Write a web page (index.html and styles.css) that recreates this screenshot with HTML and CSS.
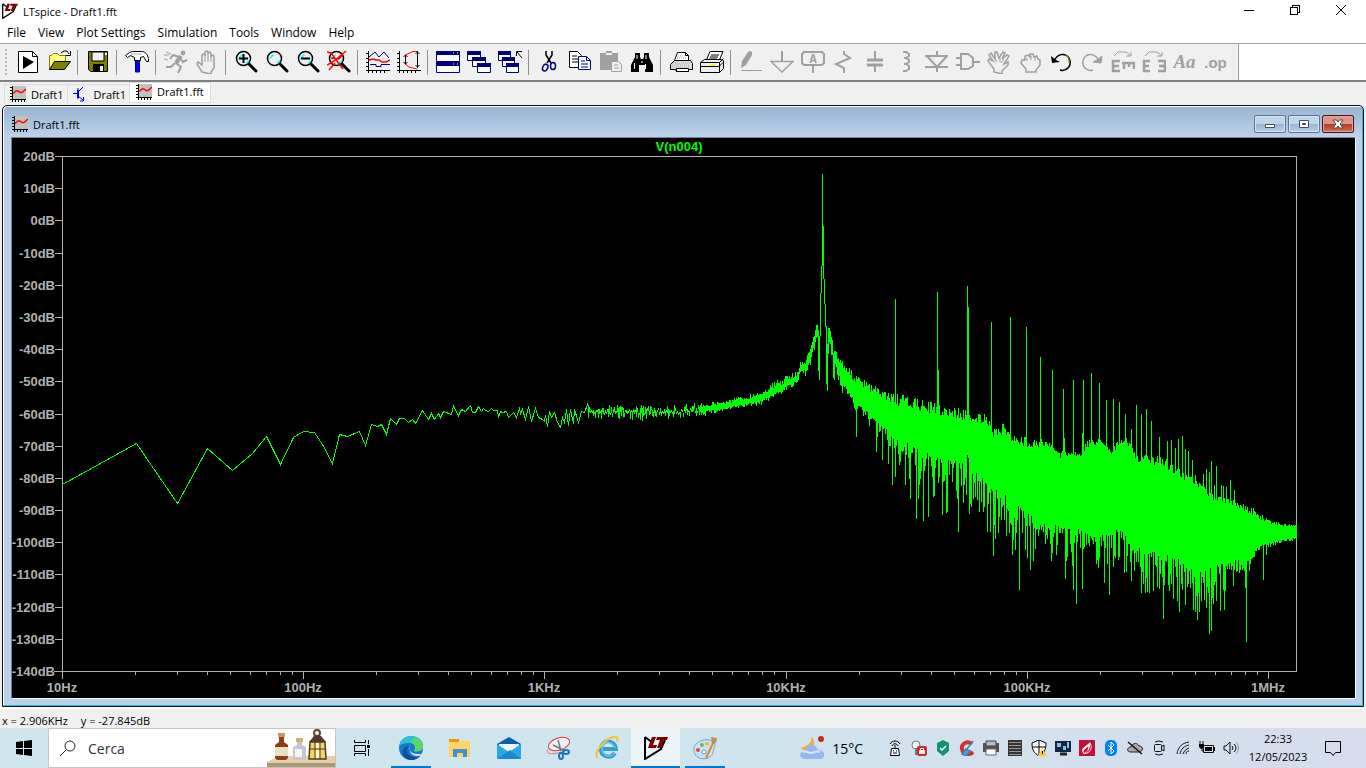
FILE: index.html
```html
<!DOCTYPE html>
<html lang="it">
  <head>
    <meta charset="UTF-8" />
    <title>LTspice - Draft1.fft</title>
    <link rel="stylesheet" href="styles.css">
  </head>
  <body>
    <svg class="sprite" aria-hidden="true">
      <symbol id="icon-chart" viewBox="0 0 16 16">
        <path d="M2 0h14v14H2z" fill="#c0c0c0"/>
        <path d="M2.5 0v16M0 13.5h16M0 1.5h2M0 4.5h2M0 7.5h2M0 10.5h2M5.5 14v2M8.5 14v2M11.5 14v2M14.5 14v2" stroke="#000" fill="none" shape-rendering="crispEdges"/>
        <path d="M3 7.5l3-2.500h2l2 1.500h2l4-3.500" stroke="#f00" stroke-width="1.5" fill="none"/>
      </symbol>
      <symbol id="icon-lt" viewBox="0 0 24 24">
        <path d="M1 1v22l16-10 4-9M1 1l8 6" stroke="#000" stroke-width="2" fill="none"/>
        <path d="M8 1h4L9 9h4l-1 3H4l1-3zM13 1h11l-1 3h-3l-3 8h-4l3-8h-4z" fill="#800000"/>
      </symbol>
      <symbol id="icon-glass" viewBox="0 0 24 24">
        <path d="M15 14l7 7" stroke="#000" stroke-width="3" stroke-linecap="round"/>
        <circle cx="9.5" cy="8.5" r="7" fill="#eee" stroke="#000" stroke-width="1.5"/>
        <path d="M4.5 8.5l4-4M12 13.5l3-3" stroke="#0ff" stroke-width="1.5"/>
      </symbol>
    </svg>

    <div class="titlebar">
      <svg class="app-icon" viewBox="0 0 24 24"><use href="#icon-lt"/></svg>
      <span class="title">LTspice - Draft1.fft</span>
      <div class="window-buttons">
        <button aria-label="Minimize"><svg viewBox="0 0 10 10"><path d="M0 5.5h10"/></svg></button>
        <button aria-label="Restore"><svg viewBox="0 0 10 10"><path d="M.5 2.5h7v7h-7zM2.5 2.5v-2h7v7h-2"/></svg></button>
        <button aria-label="Close"><svg viewBox="0 0 10 10"><path d="M0 0l10 10M10 0L0 10" shape-rendering="auto"/></svg></button>
      </div>
    </div>

    <nav class="menu">
      <a href="#">File</a>
      <a href="#">View</a>
      <a href="#">Plot Settings</a>
      <a href="#">Simulation</a>
      <a href="#">Tools</a>
      <a href="#">Window</a>
      <a href="#">Help</a>
    </nav>

    <div class="toolbar-row">
      <div class="toolbar">
        <span class="grip"></span>
        <button aria-label="Run"><svg viewBox="0 0 24 24"><path d="M2.5 1.5h14l5 5v16h-19z" fill="#fff" stroke="#000"/><path d="M16.5 1.5v5h5" fill="none" stroke="#000"/><path d="M7 6l11 6-11 7z"/></svg></button>
        <button aria-label="Open"><svg viewBox="0 0 24 24"><path d="M2.5 19.5v-14h2l2-2h4l2 2h6v6" fill="#ffff80" stroke="#808000"/><path d="M2.5 19.5l5-8h16l-6 8z" fill="#808000" stroke="#000"/><path d="M14 3l3-2h3l2 3M23.5 1v4.5h-5" fill="none" stroke="#000"/></svg></button>
        <span class="sep"></span>
        <button aria-label="Save"><svg viewBox="0 0 24 24"><path d="M2.5 1.5h19v20h-17l-2-2z" fill="#808000" stroke="#000"/><path d="M6 2h12v9H6z" fill="#f0f0f0" stroke="#000"/><path d="M7 14h11v8H7z"/><path d="M14 16h3v5h-3z" fill="#f0f0f0"/><path d="M19 3h2v2h-2z" fill="#fff"/></svg></button>
        <span class="sep"></span>
        <button aria-label="Control panel"><svg viewBox="0 0 24 24"><path d="M10.5 10v12h4V10z" fill="#00f" stroke="#000080"/><path d="M.5 5.5l4-3 3-1h9c4 0 6 3 7 7v3h-2l-3-5-3 1v3h-6v-3l-4-2-3 2z" fill="#fff" stroke="#000"/><path d="M6 4h11" stroke="#aaa"/></svg></button>
        <span class="sep"></span>
        <button aria-label="Simulate" disabled><svg viewBox="0 0 24 24" class="gray"><circle cx="19" cy="3" r="2" fill="#a0a0a0"/><path d="M17 6l-5 7" stroke-width="4"/><path d="M15 7L9 5 6 9M16 8l3 4 4-2M12 13l5 4-3 6M11 13l-4 4H2" stroke-width="2"/><path d="M2 2l5 2M0 5h5M0 9l4 1"/></svg></button>
        <button aria-label="Halt" disabled><svg viewBox="0 0 24 24" class="gray"><path d="M7 22L2 14l1-2 4 3V5l2-1 1 1V2l2-1 1 1v1l2-1 1 2v2l2-1 1 2v11l-3 4v2z" stroke-width="1.5"/><path d="M10 4v8M13 3v9M16 5v7"/></svg></button>
        <span class="sep"></span>
        <button aria-label="Zoom in"><svg viewBox="0 0 24 24"><use href="#icon-glass"/><path d="M5 8.500h9M9.500 4v9" stroke="#000" stroke-width="2"/></svg></button>
        <button aria-label="Pan"><svg viewBox="0 0 24 24"><use href="#icon-glass"/></svg></button>
        <button aria-label="Zoom out"><svg viewBox="0 0 24 24"><use href="#icon-glass"/><path d="M5 8.500h9" stroke="#000" stroke-width="2"/></svg></button>
        <button aria-label="Zoom full extents"><svg viewBox="0 0 24 24"><use href="#icon-glass"/><path d="M0 2l4 1 12 16M0 15l7-4L19 1M2 20l6-7M4 8l8 1 4-5" stroke="#f00" stroke-width="1.5" fill="none"/></svg></button>
        <span class="sep"></span>
        <button aria-label="Autorange"><svg viewBox="0 0 24 24"><path d="M2.5 1v22M0 20.5h24M0 3.5h2M0 8.5h2M0 12.5h2M0 16.5h2M6.5 20v3M10.5 20v3M14.5 20v3M18.5 20v3" stroke="#000"/><path d="M3 7l6-5 4 5 5-5 5 6" fill="none" stroke="#000080"/><path d="M3 10l4-1 3 1h3l3 2h4l4-2" fill="none" stroke="#f00" stroke-width="1.5"/><path d="M4 14.5h6v2h5v-2h9" fill="none" stroke="#000080"/></svg></button>
        <button aria-label="Plot limits"><svg viewBox="0 0 24 24"><path d="M2.5 1v22M0 20.5h24M0 3.5h2M0 8.5h2M0 12.5h2M0 16.5h2M6.5 20v3M10.5 20v3M14.5 20v3M18.5 20v3" stroke="#000"/><path d="M20 1.500h-4L8 5M8 14l4 3 8 2" fill="none" stroke="#f00"/><path d="M8.5 5v9M6.500 7l2-2 2 2M6.500 12l2 2 2-2M20.5 1v17M18.500 4l2-2 2 2M18.500 15l2 2 2-2" fill="none" stroke="#000"/></svg></button>
        <span class="sep"></span>
        <button aria-label="Tile windows"><svg viewBox="0 0 24 24" class="navy"><path d="M.5 1.5h23v10H.5zM.5 12.5h23v10H.5z"/><path d="M0 1h24v4H0zM0 12h24v4H0z" fill="#000080" stroke="none"/><path d="M17 3h1M21 3h1M17 14h1M21 14h1" stroke="#fff"/></svg></button>
        <button aria-label="Cascade windows"><svg viewBox="0 0 24 24" class="navy"><path d="M.5 1.5h13v9H.5zM5.5 7.5h13v9h-13zM10.5 13.5h13v9h-13z"/><path d="M0 1h14v4H0zM5 7h14v4H5zM10 13h14v4H10z" fill="#000080" stroke="none"/></svg></button>
        <button aria-label="Close windows"><svg viewBox="0 0 24 24" class="navy"><path d="M.5 1.5h12v9H.5zM4.5 7.5h12v9h-12zM8.5 13.5h12v9h-12z"/><path d="M0 1h13v4H0zM4 7h13v4H4zM8 13h13v4H8z" fill="#000080" stroke="none"/><path d="M18.5 6V1.5H24M19 2l5 6" fill="none" stroke="#000"/></svg></button>
        <span class="sep"></span>
        <button aria-label="Cut"><svg viewBox="0 0 24 24"><path d="M9 1v4l5 8M15 1v4l-5 8" fill="none" stroke="#000" stroke-width="1.5"/><ellipse cx="8" cy="17.5" rx="2.5" ry="3.5" transform="rotate(25 8 18)" class="loop"/><ellipse cx="16" cy="16" rx="2.5" ry="3.5" class="loop"/></svg></button>
        <button aria-label="Copy"><svg viewBox="0 0 24 24"><path d="M1.5 1.5h8l4 4v12h-12z" fill="#fff" stroke="#000"/><path d="M4 6h5M4 9h7M4 12h7" stroke="#000"/><path d="M10.5 6.5h8l4 4v9h-12z" fill="#fff" stroke="#000080"/><path d="M18.5 6.5v4h4M13 11h4M13 14h7M13 17h7" fill="none" stroke="#000080"/></svg></button>
        <button aria-label="Paste" disabled><svg viewBox="0 0 24 24"><path d="M1 3h6V1h6v2h6v8h-7v9H1z" fill="#a0a0a0"/><path d="M7 4h6" stroke="#f0f0f0" stroke-width="2"/><path d="M12.5 11.5h7l3 3v7h-10z" fill="#eee" stroke="#a0a0a0"/><path d="M15 15h4M15 18h5" stroke="#a0a0a0"/></svg></button>
        <button aria-label="Find"><svg viewBox="0 0 24 24"><path d="M5 3h5v4l1 2h2l1-2V3h5v4l4 8v7h-8v-7h-6v7H1v-7l4-8z"/><path d="M4.5 13v6M15.5 14v5M7 5v4M16 5v4M11 12h2" stroke="#fff"/></svg></button>
        <span class="sep"></span>
        <button aria-label="Print"><svg viewBox="0 0 24 24"><path d="M1.5 14.5l4-4h16l2 3v6h-4v2h-12l-1-2h-5z" fill="#ddd" stroke="#000"/><path d="M5.5 10.5l3-8h8l3 3v5z" fill="#fff" stroke="#000"/><path d="M16.5 2.500v3h3" fill="none" stroke="#000"/><path d="M4 13h17M3 15h18M3 17h18M9 6h6M8 8h9" stroke="#aaa" stroke-dasharray="1 1"/><path d="M7.500 18.500h12v3h-12z" fill="#fff" stroke="#000"/></svg></button>
        <button aria-label="Print setup"><svg viewBox="0 0 24 24"><path d="M6 11l4-9.500h13L19 11z" fill="#fff" stroke="#000"/><path d="M11 5h8M10 7h8M9 9h8" stroke="#000"/><path d="M.5 12.5l4-3h17l2 1v8l-4 4H.5zM.5 12.5h19v10M19.5 12.5l4-4M1 16.5h18l4-4" fill="#eee" stroke="#000"/><path d="M10 15h5" stroke="#ff0" stroke-width="2"/></svg></button>
        <span class="sep"></span>
        <button aria-label="Draw wire" disabled><svg viewBox="0 0 24 24"><path d="M2 18l1-7 6-9 2-1 2 1v3L7 15z" fill="#a0a0a0"/><path d="M2 20.5h21" stroke="#a0a0a0"/></svg></button>
        <button aria-label="Ground" disabled><svg viewBox="0 0 24 24" class="gray"><path d="M12 1v10" stroke-width="2"/><path d="M1 11.5h22L12 22z" stroke-width="1.5"/></svg></button>
        <button aria-label="Label net" disabled><svg viewBox="0 0 24 24" class="gray"><path d="M3 2h18l2 2v9l-2 2H3l-2-2V4zM12 15v8" stroke-width="2"/><text x="12" y="13">A</text></svg></button>
        <button aria-label="Resistor" disabled><svg viewBox="0 0 24 24" class="gray"><path d="M12 1v3l6 4-14 6 8 4v5" stroke-width="2"/></svg></button>
        <button aria-label="Capacitor" disabled><svg viewBox="0 0 24 24" class="gray"><path d="M12 1v9M12 15v7" stroke-width="2"/><path d="M4 10h16M4 15h16" stroke-width="3"/></svg></button>
        <button aria-label="Inductor" disabled><svg viewBox="0 0 24 24" class="gray"><path d="M9 2h3l3 2v2l-3 2h-2 2l3 2v2l-3 2h-2 2l3 2v3l-3 2H9" stroke-width="2"/></svg></button>
        <button aria-label="Diode" disabled><svg viewBox="0 0 24 24" class="gray"><path d="M12 1v5M12 17v5M0 6h23M2 6l10 11L22 6M0 17h23" stroke-width="2"/></svg></button>
        <button aria-label="Component" disabled><svg viewBox="0 0 24 24" class="gray"><path d="M5 4h7l5 4v8l-5 3H5zM0 8h5M0 15h5M17 12h7" stroke-width="2"/></svg></button>
        <button aria-label="Move" disabled><svg viewBox="0 0 24 24" class="gray"><path d="M7 22v-3l-6-8 1-2 4 2-4-6 2-2 4 6V2h2l2 6 4-6 2 1-3 6 5-4 2 1-5 8 4-2v3l-6 6v3z" stroke-width="1.5"/><path d="M8 9l2 3M13 8v4M17 9l-3 4"/></svg></button>
        <button aria-label="Drag" disabled><svg viewBox="0 0 24 24" class="gray"><path d="M8 22v-3l-5-6 1-3h3V6l3-1 2 2V4h3l1 3 3-1 1 3 2 1v5l-4 5v2z" stroke-width="1.5"/><path d="M9 8v3M13 6v4M17 7v4"/></svg></button>
        <button aria-label="Undo"><svg viewBox="0 0 24 24"><path d="M5 11C8 4 16 2 20 8c4 8-3 14-9 12" fill="none" stroke="#000" stroke-width="1.5"/><path d="M2 6l1 7 8-1-4-2z"/><path d="M16 4l4 4v5" fill="none" stroke="#808000"/></svg></button>
        <button aria-label="Redo" disabled><svg viewBox="0 0 24 24" class="gray"><path d="M19 11C16 4 8 2 4 8c-4 8 3 14 9 12" stroke-width="1.5"/><path d="M22 6l-1 7-8-1 4-2z" fill="#a0a0a0"/></svg></button>
        <button aria-label="Rotate" disabled><svg viewBox="0 0 24 24" class="gray"><path d="M3 6l4-4h8l5 4M20 2v4h-5"/><path d="M9 11H2v10h7M2 16h6M11 13h13M13 12v7M18 12v5M23 12v7" stroke-width="2.5"/></svg></button>
        <button aria-label="Mirror" disabled><svg viewBox="0 0 24 24" class="gray"><path d="M3 6l4-4h8l5 4M20 2v4h-5"/><path d="M8 11H2v10h6M2 16h5M16 11h7v10h-7M17 16h6" stroke-width="2.5"/></svg></button>
        <button aria-label="Text" disabled class="text-tool italic">Aa</button>
        <button aria-label="SPICE directive" disabled class="text-tool">.op</button>
      </div>
    </div>

    <div class="tabs">
      <a href="#" class="tab"><svg class="icon16"><use href="#icon-chart"/></svg>Draft1</a>
      <a href="#" class="tab"><svg class="icon16" viewBox="0 0 16 16"><path d="M5 2v11M0 7.5h5M5 6l5-5M5 10l5 4M10.500 11v4H7" fill="none" stroke="#00f"/><path d="M5 4v8" stroke="#00f" stroke-width="2"/></svg>Draft1</a>
      <a href="#" class="tab active"><svg class="icon16"><use href="#icon-chart"/></svg>Draft1.fft</a>
    </div>

    <main class="plot-window">
      <div class="plot-title">
        <svg class="icon16"><use href="#icon-chart"/></svg>
        <span>Draft1.fft</span>
        <div class="aero-buttons">
          <button aria-label="Minimize plot"><svg viewBox="0 0 14 12"><path d="M2.5 6.5h9v3h-9z"/></svg></button>
          <button aria-label="Maximize plot"><svg viewBox="0 0 14 12"><path d="M2.5 2.5h9v7h-9zM5.5 5.5h3v1h-3z"/></svg></button>
          <button aria-label="Close plot" class="close"><svg viewBox="0 0 14 12"><path d="M2 2h3.500L7 4l1.500-2H12L9 6l3 4H8.500L7 8l-1.500 2H2l3-4z"/></svg></button>
        </div>
      </div>
      <div class="plot-frame">
        <svg id="plot" class="plot" viewBox="12 138 1343 560" role="img" aria-label="V(n004)">
          <text class="trace-name" x="679" y="151">V(n004)</text>
          <g id="axes" class="axes"></g>
          <path id="trace" class="trace"/>
        </svg>
      </div>
    </main>

    <div class="status">
      <span>x = 2.906KHz</span>
      <span>y = -27.845dB</span>
    </div>

    <footer class="taskbar">
      <button class="task start" aria-label="Start"><svg class="icon16" viewBox="0 0 16 16"><path d="M0 2l7-1v7H0zM8 1l8-1v8H8zM0 9h7v6l-7-1zM8 9h8v7l-8-1z"/></svg></button>
      <div class="search">
        <svg class="icon16" viewBox="0 0 16 16"><circle cx="10" cy="6" r="5" fill="none" stroke="#222"/><path d="M6 10l-6 6" stroke="#222"/></svg>
        <input type="text" aria-label="Cerca" placeholder="Cerca">
        <svg class="doodle" viewBox="0 0 68 38">
          <path d="M0 33l12-6h56v11H0z" fill="#e4cfa8"/><path d="M0 34h68v4H0z" fill="#ac9776"/>
          <path d="M11 4h7v4h-7z" fill="#c59a5b"/><path d="M12 8h5v5l4 3v13l-2 2h-9l-2-2V16l4-3z" fill="#8d3d18"/><path d="M8 18h13v9H8z" fill="#e9dfc2"/>
          <path d="M29 9h7v4h-7z" fill="#d5ae67"/><path d="M30 13h5v3l4 2v13H26V18l4-2z" fill="#c6c7cc"/><path d="M28 20h7v8h-7z" fill="#f6f6f8"/>
          <circle cx="50" cy="4" r="3" fill="none" stroke="#594438" stroke-width="2"/><path d="M42 13l5-6h7l5 6z" fill="#4d3b31"/><path d="M43 13h15l1 17H42z" fill="#f5d35d" stroke="#4d3b31" stroke-width="1.5"/><path d="M48 13v17M53 13v17M42 20h17" stroke="#4d3b31"/><path d="M49 14h3v5h-3zM49 21h3v8h-3z" fill="#fff6c8"/>
        </svg>
      </div>
      <button class="task" aria-label="Task view"><svg class="icon16" viewBox="0 0 16 16"><path d="M.5 0v2.5h11V0M.5 5.5h11v6H.5zM.5 16v-2.5h11V16M14.5 0v4M14.5 9v7" fill="none" stroke="#000"/><path d="M13 5h3v3h-3z"/></svg></button>
      <button class="task running" aria-label="Edge"><svg class="icon24" viewBox="0 0 24 24"><circle cx="12" cy="12" r="12" fill="#1479cc"/><path d="M0 10C2 2 8 0 12 0c8 0 13 6 12 11-1 4-6 5-9 4 3-5-1-8-5-8-4 0-8 1-10 3z" fill="#32bddb"/><path d="M15 1c7 2 10 8 9 11-2 4-7 4-9 3 3-5-1-8-3-9z" fill="#5cd763"/><path d="M10 10c-6 5 1 14 11 10-5 6-14 5-17-1-2-6 3-9 6-9z" fill="#114f96"/><path d="M12 10c-4 3 0 9 9 8l2 1c-9 4-15-4-11-9z" fill="#d3e5ef"/></svg></button>
      <button class="task" aria-label="Explorer"><svg class="icon24" viewBox="0 0 24 24"><path d="M1 3h9l2 2h10v16H1z" fill="#ffd462"/><path d="M1 3h10v3H1z" fill="#dd9d12"/><path d="M5 13h14v8h-4v-4H9v4H5z" fill="#3c91d1"/></svg></button>
      <button class="task" aria-label="Mail"><svg class="icon24" viewBox="0 0 24 24"><path d="M0 8l12-7 12 7v15H0z" fill="#0860ad"/><path d="M2 8h20v8H2z" fill="#f2f5f8"/><path d="M0 8l12 8L24 8v15H0z" fill="#25a9e8"/><path d="M0 23l13-9L24 23z" fill="#1689d3"/></svg></button>
      <button class="task" aria-label="Snipping tool"><svg class="icon24" viewBox="0 0 24 24"><ellipse cx="13" cy="8" rx="11" ry="6" transform="rotate(-18 13 8)" fill="#edf1f4" stroke="#df3c45"/><path d="M2 13c-3 5 4 6 13 3" fill="none" stroke="#e8777b"/><path d="M12 4l3 11M7 9l12 6" stroke="#777" stroke-width="1.5"/><ellipse cx="15" cy="20" rx="2" ry="3" fill="none" stroke="#1778bc" stroke-width="2"/><ellipse cx="20" cy="16" rx="3" ry="2" fill="none" stroke="#1778bc" stroke-width="2"/></svg></button>
      <button class="task" aria-label="Internet Explorer"><svg class="icon24" viewBox="0 0 24 24"><path d="M20 17c-5 7-15 3-14-5C7 3 20 3 21 13H8" fill="none" stroke="#2c9fd9" stroke-width="4"/><path d="M20 17c-5 6-13 3-13-4 0-9 12-8 13-1" fill="none" stroke="#82d8f7"/><path d="M3 22c-5-4 5-18 15-21 5-1 5 2 4 5" fill="none" stroke="#f3c62e" stroke-width="2"/></svg></button>
      <button class="task current" aria-label="LTspice"><svg class="icon24"><use href="#icon-lt"/></svg></button>
      <button class="task running" aria-label="Paint"><svg class="icon24" viewBox="0 0 24 24"><path d="M2 18C-3 9 8 2 17 4c9 4 3 9 3 12 0 7-14 10-18 2z" fill="#c6e1f1" stroke="#76a4c6"/><circle cx="5" cy="14" r="2" fill="#df493c"/><circle cx="9" cy="9" r="2" fill="#79b850"/><circle cx="14" cy="8" r="2" fill="#f1bd35"/><circle cx="11" cy="16" r="2" fill="#fff" stroke="#5a99c7"/><path d="M21 5l-8 17" stroke="#e18428" stroke-width="2"/><path d="M18 1l6 1-1 5-4 1z" fill="#bb8f65"/></svg></button>

      <div class="tray">
        <a href="#" class="weather">
          <svg class="icon24" viewBox="0 0 24 24"><path d="M11 0c2 5-1 9-10 12 4 5 13 2 13-5 0-3-1-5-3-7z" fill="#f3aa37"/><path d="M5 23c-7 0-6-9 0-8 2-8 11-8 13-1 8 0 8 9 2 9z" fill="#93b9f0"/><path d="M3 16c4-2 5 1 8 1s5-3 9-1" stroke="#d7e7fc" fill="none" stroke-width="2"/><circle cx="21" cy="3" r="3" fill="#c42b1c"/></svg>
          15°C
        </a>
        <div class="tray-icons">
          <svg viewBox="0 0 16 16"><path d="M3 4c2-4 8-4 10 0M5 6c1-3 5-3 6 0M8 5v3" fill="none" stroke="#000"/><path d="M4.5 8.5h7l1 7h-9z" fill="#fff" stroke="#000"/><path d="M6 11h1M9 11h1M6 13h4" stroke="#000"/></svg>
          <svg viewBox="0 0 16 16"><circle cx="5" cy="5" r="4" fill="#fff" stroke="#777"/><path d="M5 8v6h3" stroke="#777" fill="none" stroke-width="2"/><rect x="6" y="6" width="10" height="10" rx="2" fill="#da2531"/><path d="M8.500 10.500h5v3h-5z" fill="#fff" stroke="#fff"/><path d="M9.500 10V8.500h3V10" fill="none" stroke="#fff"/></svg>
          <svg viewBox="0 0 16 16"><path d="M8 0l6 3v8l-6 5-6-5V3z" fill="#14916f"/><path d="M5 8l2 2 4-4" fill="none" stroke="#fff" stroke-width="1.5"/></svg>
          <svg viewBox="0 0 16 16"><path d="M13 4C8 0 2 4 3 9c1 6 8 6 11 3" fill="none" stroke="#cf3430" stroke-width="4"/><path d="M14 1L8 9M3 14l4-5 4 2-4 5z" stroke="#3c85bd" fill="#599bd0" stroke-width="1.5"/></svg>
          <svg viewBox="0 0 16 16"><path d="M0 3h16v9H0z" fill="#555"/><path d="M3 1h10v5H3z" fill="#bbb" stroke="#444"/><path d="M3 9h10v6H3z" fill="#fff" stroke="#666"/></svg>
          <svg viewBox="0 0 16 16"><path d="M1 0h14v16H1z" fill="#333"/><path d="M2 2.500h12M2 5.500h12M2 8.500h12M2 11.500h12M2 14.500h12" stroke="#999"/></svg>
          <svg viewBox="0 0 16 16"><path d="M8 0l7 3c0 7-2 10-7 13C3 13 1 10 1 3z" fill="#fff" stroke="#000"/><path d="M8 0v15M1 7h14" stroke="#000"/><path d="M11 8l5 8H7z" fill="#ffca25"/><path d="M11.500 11v3" stroke="#000"/></svg>
          <svg viewBox="0 0 16 16"><path d="M0 1h16v11H0z" fill="#15243f"/><path d="M2 3h4v4H2zM8 6h3v4H8zM12 2h2v6h-2z" fill="#7fc2ee"/><path d="M5 14h7" stroke="#222" stroke-width="3"/></svg>
          <svg viewBox="0 0 16 16"><path d="M0 0h16v16H0z" fill="#c40e35"/><path d="M5 14C0 8 7 7 11 2c4 6 0 12-6 12z" fill="#fff"/><path d="M6 13c4-2 5-5 5-9 2 5 0 8-5 9zM5 13c-2-4 3-4 4-7 1 3-1 6-4 7z" fill="#c40e35"/></svg>
          <svg viewBox="0 0 16 16"><rect x="2" width="12" height="16" rx="5" fill="#0882ee"/><path d="M5 5l6 6-3 3V2l3 3-6 6" fill="none" stroke="#fff"/></svg>
          <svg viewBox="0 0 16 16"><path d="M4 12c-5 0-4-5 0-5 2-5 7-4 8-1 5 0 4 6 0 6z" fill="#aaa" stroke="#222"/><path d="M1 2l14 12" stroke="#111" stroke-width="1.5"/></svg>
          <svg viewBox="0 0 16 16"><rect x="3.500" y="4.500" width="7" height="7" rx="1" class="line"/><path d="M10 7l3-2v6l-3-2M4 2q4-2 8 0M4 14q4 2 8 0" class="line"/></svg>
          <svg viewBox="0 0 16 16"><path d="M2 14C3 7 7 3 14 2M5 14c1-5 4-8 9-9M8 14c1-3 3-5 6-6M11 14c0-2 1-3 3-3" class="line"/></svg>
          <svg viewBox="0 0 16 16"><path d="M4.5 5.5h10v7h-10z" class="line"/><path d="M6 7h7v4H6zM0 4h5v3l-2 2H2L0 7zM15 7h1v4h-1z"/><path d="M1 1v3M4 1v3M3 8v3h2" class="line"/></svg>
          <svg viewBox="0 0 16 16"><path d="M1 6h2l4-4v12l-4-4H1zM9 6q2 2 0 4M11 4q4 4 0 8" class="line"/><path d="M13 2q5 6 0 12" fill="none" stroke="#999"/></svg>
        </div>
        <div class="clock"><span>22:33</span><span>12/05/2023</span></div>
        <button class="notify" aria-label="Notifications"><svg class="icon16" viewBox="0 0 16 16"><path d="M.5 1.5h15v11h-5l-2.500 3-2.500-3h-5z" fill="none" stroke="#000"/></svg></button>
      </div>
    </footer>
    <script src="plot.js"></script>
  </body>
</html>
```

FILE: styles.css
```css
* {
  box-sizing: border-box;
}
body {
  margin: 0;
  min-height: 100vh;
  display: flex;
  flex-direction: column;
  background-color: #f0f0f0;
  color: #000;
  font-family: "Open Sans", "Noto Sans", sans-serif;
  font-size: 12px;
}
a {
  color: inherit;
  text-decoration: none;
}
button {
  padding: 0;
  border: none;
  background: none;
  font-family: inherit;
  color: inherit;
}
svg {
  display: block;
  flex-shrink: 0;
}
.sprite {
  display: none;
}
.icon16 {
  width: 16px;
  height: 16px;
}
.icon24 {
  width: 24px;
  height: 24px;
}
.titlebar {
  display: flex;
  align-items: center;
  height: 22px;
  padding: 0 2px;
  background-color: #fff;
  font-size: 11px;
}
.app-icon {
  width: 16px;
  height: 16px;
  margin-right: 5px;
}
.window-buttons {
  display: flex;
  align-self: flex-start;
  margin-left: auto;
}
.window-buttons button {
  width: 46px;
  height: 20px;
  display: flex;
  align-items: center;
  justify-content: center;
}
.window-buttons svg {
  width: 10px;
  height: 10px;
  fill: none;
  stroke: #000;
  shape-rendering: crispEdges;
}
.menu {
  display: flex;
  align-items: center;
  gap: 12px;
  height: 22px;
  padding: 0 7px;
  background-color: #fff;
  border-bottom: 1px solid #a0a0a0;
}
.toolbar-row {
  display: flex;
  height: 38px;
  background-color: #fff;
  border-bottom: 2px solid #808080;
}
.toolbar {
  display: flex;
  align-items: center;
  padding: 0 7px 0 5px;
  background-color: #f0f0f0;
  border-right: 1px solid #a0a0a0;
}
.toolbar button {
  width: 31px;
  height: 32px;
  display: flex;
  align-items: center;
  justify-content: center;
}
.toolbar svg {
  width: 24px;
  height: 24px;
}
.grip {
  width: 2px;
  height: 26px;
  margin-right: 5px;
  background: repeating-linear-gradient(#b8b8b8 0 2px, #f0f0f0 2px 4px);
}
.sep {
  width: 1px;
  height: 25px;
  margin: 0 4px 0 3px;
  background-color: #909090;
}
.gray {
  fill: none;
  stroke: #a0a0a0;
}
.gray text {
  fill: #a0a0a0;
  stroke: none;
  font: bold 12px "Liberation Mono", monospace;
  text-anchor: middle;
}
.navy {
  fill: #fff;
  stroke: #000080;
}
.loop {
  fill: none;
  stroke: #000080;
  stroke-width: 1.5;
}
.toolbar .text-tool {
  color: #a0a0a0;
  font: bold 15px "Liberation Sans", Arial, sans-serif;
}
.toolbar .italic {
  font: italic bold 19px "Liberation Serif", serif;
}
.tabs {
  display: flex;
  align-items: flex-end;
  height: 23px;
  padding: 0 4px 2px;
  font-size: 11px;
}
.tab {
  display: flex;
  align-items: center;
  gap: 5px;
  height: 19px;
  padding: 0 3px 0 5px;
  border: 1px solid #dcdcdc;
  border-width: 1px 0 0 1px;
}
.tab.active {
  height: 21px;
  padding: 0 6px 2px;
  border-width: 1px;
  background-color: #fff;
}
.plot-window {
  flex: 1;
  display: flex;
  flex-direction: column;
  margin: 0 2px;
  padding: 0 7px 7px 8px;
  border: 1px solid #111;
  border-radius: 5px 5px 0 0;
  background: linear-gradient(#99b4d1, #b9d1ea 30px);
  box-shadow: inset -1px -1px #2bc0dc, inset 1px 1px #fff;
}
.plot-title {
  display: flex;
  align-items: center;
  gap: 5px;
  height: 31px;
  padding: 5px 2px 0 1px;
  font-size: 11px;
}
.aero-buttons {
  display: flex;
  gap: 2px;
  margin-left: auto;
}
.aero-buttons button {
  width: 32px;
  height: 18px;
  display: flex;
  align-items: center;
  justify-content: center;
  border: 1px solid #5d7390;
  border-radius: 2px;
  box-shadow: inset 0 0 0 1px #d5e4f4;
  background: linear-gradient(#c0d4e9 50%, #98b4d1 50%, #bad1e9);
}
.aero-buttons .close {
  border-color: #4a1118;
  box-shadow: inset 0 0 0 1px #e3a499;
  background: linear-gradient(#dc9588 50%, #b83822 50%, #d47354);
}
.aero-buttons svg {
  width: 14px;
  height: 12px;
  fill: #fff;
  stroke: #454d5b;
}
.plot-frame {
  flex: 1;
  border: 1px solid;
  border-color: #808080 #fff #fff #808080;
  background-color: #000;
}
.plot {
  width: 100%;
  height: auto;
}
.plot text {
  font: bold 13px "Liberation Sans", Arial, sans-serif;
  fill: #b0b0b0;
  text-anchor: middle;
}
.plot .trace-name {
  fill: #0f0;
}
.plot .db {
  text-anchor: end;
}
.axes path {
  fill: none;
  stroke: #b0b0b0;
  shape-rendering: crispEdges;
}
.trace {
  fill: none;
  stroke: #0f0;
  shape-rendering: crispEdges;
}
.status {
  display: flex;
  align-items: center;
  gap: 13px;
  height: 21px;
  padding: 3px 2px 0;
  border-top: 2px solid #fff;
  font-size: 11px;
}
.taskbar {
  display: flex;
  align-items: stretch;
  height: 40px;
  background: linear-gradient(90deg, #cfe7ec, #d0e4ed 55%, #d6dcec);
}
.task {
  width: 49px;
  display: flex;
  align-items: center;
  justify-content: center;
  border: solid transparent;
  border-width: 2px 0;
}
.start {
  width: 48px;
}
.running {
  background: linear-gradient(#0078d7, #0078d7) bottom / 40px 2px no-repeat border-box;
}
.current {
  background-color: #edf4f8;
  border-bottom-color: #0078d7;
}
.search {
  width: 288px;
  display: flex;
  align-items: center;
  margin-right: 1px;
  padding-left: 11px;
  border: 1px solid #c4c4c4;
  background-color: #fff;
}
.search input {
  flex: 1;
  min-width: 0;
  margin-left: 12px;
  padding: 0;
  border: none;
  outline: none;
  font: 14px "Open Sans", "Noto Sans", sans-serif;
}
.search input::placeholder {
  color: #333;
  opacity: 1;
}
.doodle {
  width: 68px;
  height: 38px;
}
.tray {
  display: flex;
  align-items: center;
  margin-left: auto;
}
.weather {
  display: flex;
  align-items: center;
  gap: 8px;
  margin-right: 24px;
  font-size: 14px;
}
.tray-icons {
  display: flex;
  gap: 8px;
}
.tray-icons svg {
  width: 16px;
  height: 16px;
}
.line {
  fill: none;
  stroke: #111;
}
.clock {
  display: flex;
  flex-direction: column;
  align-items: center;
  width: 78px;
  font-size: 11px;
  line-height: 18px;
}
.notify {
  width: 49px;
  display: flex;
  justify-content: center;
  padding-right: 17px;
}
```

FILE: plot.js
```javascript
const left = 62, right = 1296, top_ = 156, bottom = 671;
const decade = 241;

// axes, ticks and labels
const axes = document.getElementById("axes");
let axisPath = `M${left}.5 ${bottom + 8}V${top_}.5H${right}.5V${bottom}.5H54`;

function label(text, x, y, cls) {
  const el = document.createElementNS("http://www.w3.org/2000/svg", "text");
  el.setAttribute("x", x);
  el.setAttribute("y", y);
  if (cls) el.setAttribute("class", cls);
  el.textContent = text;
  axes.appendChild(el);
}

for (let db = 20; db >= -140; db -= 10) {
  const y = Math.round(top_ + (20 - db) * (bottom - top_) / 160);
  axisPath += `M55 ${y}.5h7`;
  label(db + "dB", 55, y + 5, "db");
}
["10Hz", "100Hz", "1KHz", "10KHz", "100KHz", "1MHz"].forEach((name, i) => {
  const x = left + Math.round(i * 241.2);
  axisPath += `M${x}.5 ${bottom}v8`;
  label(name, x, 692);
  for (let n = 2; n < 10; n++) {
    const tick = Math.round(x + Math.log10(n) * decade);
    if (tick < right) axisPath += `M${tick}.5 ${bottom}v4`;
  }
});
const axisEl = document.createElementNS("http://www.w3.org/2000/svg", "path");
axisEl.setAttribute("d", axisPath);
axes.appendChild(axisEl);

// low frequency bins, far enough apart to be joined by lines
const line = [
  62,484, 136,443, 177,503, 207,448, 232,470, 252,453, 266,436, 280,464, 293,437, 303,431,
  314,432, 322,444, 332,463, 339,434, 347,436, 359,431, 365,445, 371,424, 377,426, 381,424,
  386,434, 390,418, 396,424, 399,418, 404,418, 408,422, 412,419, 415,423, 422,410, 428,419,
  431,413, 434,419, 438,413, 440,417, 443,411, 451,414, 453,406, 458,415, 461,409, 465,411,
  470,405, 472,412, 475,412, 478,406, 481,411, 483,408, 485,410, 488,411, 491,408, 493,410,
  497,410, 498,417, 500,411, 502,412, 506,411, 508,417, 511,414, 513,412, 516,417, 519,408,
  520,413, 522,409, 525,419, 528,406, 531,421, 535,408, 538,417, 542,419, 544,421, 545,415,
  547,426, 549,411, 551,417, 554,412, 557,422, 560,427, 562,417, 564,422, 566,409, 568,425,
  570,409, 573,423, 574,409, 578,422, 581,411, 584,412, 587,404, 590,410
];

// x, top, bottom, top jitter, bottom jitter
const band = [
  [588, 407, 412, 3, 8], [620, 407, 413, 3, 9], [650, 407, 413, 3, 9], [680, 407, 413, 3, 7],
  [700, 405, 411, 3, 6], [720, 403, 409, 2, 4], [740, 399, 405, 3, 4], [760, 393, 401, 3, 5],
  [780, 382, 390, 4, 5], [790, 377, 384, 3, 6], [797, 373, 381, 3, 5], [800, 364, 371, 2, 3],
  [805, 362, 370, 2, 6], [810, 349, 360, 2, 5], [815, 330, 340, 1, 3], [818, 330, 371, 0, 0],
  [832, 341, 355, 1, 1], [838, 358, 372, 3, 10], [845, 367, 386, 4, 8], [855, 379, 402, 4, 10],
  [866, 386, 411, 5, 12], [880, 393, 425, 4, 18], [897, 400, 436, 6, 38], [915, 404, 448, 6, 52],
  [940, 410, 459, 6, 58], [960, 414, 462, 6, 54], [975, 417, 470, 6, 54], [984, 420, 480, 6, 50],
  [993, 432, 488, 6, 52], [1007, 429, 496, 6, 50], [1015, 442, 504, 6, 52], [1030, 442, 514, 5, 48],
  [1044, 443, 524, 4, 30], [1060, 454, 526, 4, 38], [1080, 453, 528, 4, 42], [1090, 442, 536, 4, 28],
  [1103, 441, 535, 4, 40], [1111, 453, 532, 4, 42], [1117, 444, 528, 3, 36], [1127, 441, 536, 3, 40],
  [1136, 458, 548, 4, 40], [1150, 460, 550, 5, 44], [1163, 461, 554, 5, 38], [1180, 474, 560, 5, 46],
  [1190, 480, 568, 5, 46], [1200, 486, 570, 4, 46], [1210, 496, 566, 4, 44], [1225, 500, 562, 3, 36],
  [1240, 506, 559, 3, 20], [1250, 510, 560, 4, 10], [1258, 516, 546, 4, 6], [1270, 521, 543, 3, 4],
  [1282, 525, 540, 2, 3], [1296, 525, 537, 2, 4]
];

// columns of the carrier at about 14.3KHz
const carrier = {
  814: [336, 350], 815: [330, 342], 816: [325, 338], 817: [325, 337], 818: [330, 371], 819: [336, 380],
  820: [293, 336], 821: [266, 293], 822: [174, 266], 823: [226, 279], 824: [279, 304], 825: [304, 327],
  826: [326, 384], 827: [344, 391], 828: [328, 354], 829: [328, 342], 830: [331, 344], 831: [337, 355],
  832: [340, 355], 833: [353, 378], 834: [351, 380], 835: [351, 364], 836: [352, 367], 837: [359, 375]
};

const peaks = {
  895: 299, 937: 292, 938: 370, 967: 286, 968: 307, 991: 322, 1010: 317, 1026: 327, 1040: 357,
  1052: 370, 1063: 389, 1064: 438, 1073: 380, 1082: 433, 1083: 380, 1091: 373, 1099: 383, 1106: 400,
  1113: 399, 1119: 402, 1125: 414, 1131: 429, 1136: 405, 1141: 414, 1146: 409, 1151: 421, 1159: 437,
  1167: 441, 1171: 440, 1175: 448, 1178: 439, 1182: 436, 1185: 449, 1188: 451, 1192: 460, 1195: 475,
  1203: 474, 1206: 469, 1209: 472, 1211: 461, 1214: 485, 1216: 466, 1221: 485, 1223: 486, 1226: 487,
  1230: 480, 1234: 490
};
const dips = {
  842: 393, 856: 437, 876: 452, 882: 460, 888: 464, 892: 485, 895: 477, 905: 485, 910: 499, 916: 519,
  923: 521, 928: 517, 942: 515, 958: 532, 967: 455, 968: 458, 993: 556, 1012: 555, 1019: 590,
  1030: 570, 1033: 561, 1051: 561, 1065: 579, 1073: 590, 1076: 604, 1082: 589, 1104: 583, 1109: 595,
  1124: 573, 1141: 593, 1145: 593, 1147: 592, 1149: 593, 1163: 619, 1179: 612, 1185: 605, 1193: 610,
  1195: 612, 1197: 620, 1199: 612, 1206: 608, 1209: 634, 1211: 631, 1216: 601, 1220: 611, 1224: 610,
  1233: 586, 1245: 588, 1246: 642, 1263: 580, 1266: 555
};

let seed = 7;
function random() {
  seed = (seed * 16807) % 2147483647;
  return seed / 2147483647;
}

let d = "M";
for (let i = 0; i < line.length; i += 2) {
  d += `${line[i]}.5 ${line[i + 1]}.5 `;
}

let k = 0;
for (let x = 588; x <= right; x++) {
  while (k < band.length - 2 && x >= band[k + 1][0]) k++;
  const a = band[k], b = band[k + 1];
  const t = (x - a[0]) / (b[0] - a[0]);
  const v = a.map((n, i) => n + (b[i] - n) * t);
  let y1 = v[1] + (random() - 0.5) * 2 * v[3];
  let y2 = v[2] + Math.pow(random(), 2) * v[4];
  // sparse part of the band, bins do not fill every column yet
  if (x < 700) {
    y1 += random() * 4;
    y2 -= random() * 3;
  }
  if (carrier[x]) [y1, y2] = carrier[x];
  if (peaks[x]) y1 = peaks[x];
  if (dips[x]) y2 = dips[x];
  d += `M${x}.5 ${Math.round(y1)}V${Math.round(Math.max(y2, y1 + 2))}`;
}
document.getElementById("trace").setAttribute("d", d);
```
